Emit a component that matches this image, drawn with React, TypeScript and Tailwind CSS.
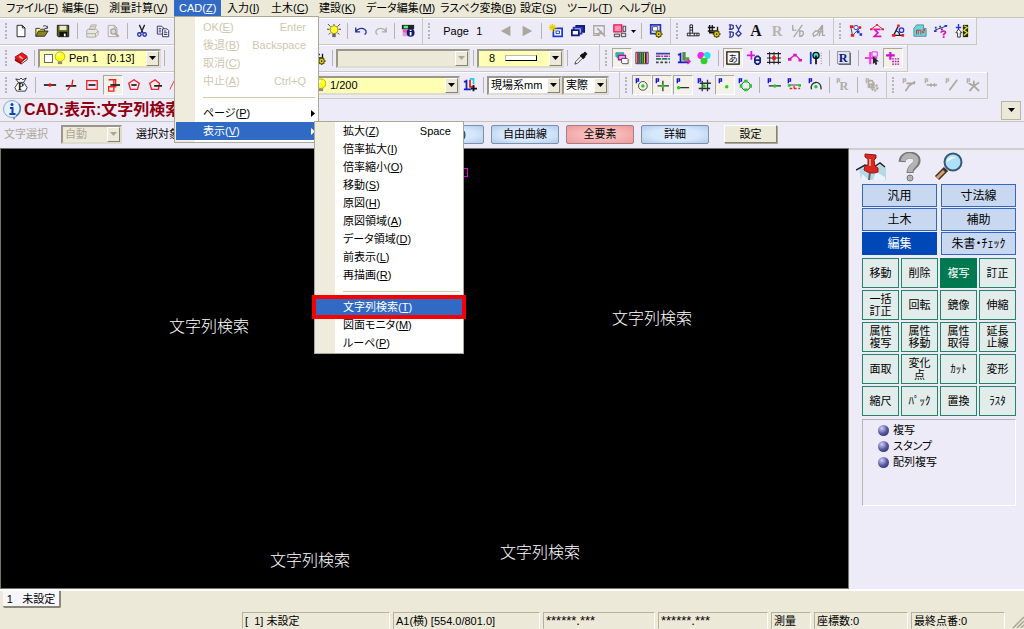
import type { ReactNode } from "react";
import clsx from "clsx";

const gear = (
  <>
    <path d="M11 7v9M6.5 11.5h9M8 8.5l6 6M14 8.5l-6 6" stroke="#5c5000" strokeWidth="2" />
    <circle cx="11" cy="11.5" r="3" fill="#e8d820" stroke="#5c5000" />
    <circle cx="11" cy="11.5" r="1" fill="#222" />
  </>
);

const snapFlag = <path d="M1.5 6V1H4v2.500H2" stroke="#1010f0" strokeWidth="1.500" fill="none" />;
const greyFlag = <path d="M1.5 6V1H4v2.500H2" stroke="#b4b2a8" strokeWidth="1.500" fill="none" />;

const icons: Record<string, ReactNode> = {
  new: <path d="M3.5 1.5h6l3 3v10h-9zM9.5 1.5v3h3" fill="#fff" stroke="#111" />,
  open: (
    <>
      <path d="M1 14V5h4l1 1h5v3" fill="#ffff70" stroke="#222" />
      <path d="M1 14l3-6h11l-4 6z" fill="#8c8420" stroke="#222" />
      <path d="M9 3c2-2 4-1 5 1m0-2v3h-3" fill="none" stroke="#222" />
    </>
  ),
  save: (
    <>
      <path d="M1.500 1.500h13v13h-12l-1-1z" fill="#5c6410" stroke="#111" />
      <path d="M4 2h8v5H4z" fill="#e8e8d8" />
      <path d="M4 9h9v5H4z" fill="#111" />
      <path d="M9 11h2v3H9z" fill="#fff" />
    </>
  ),
  print: (
    <g fill="#e8e6e0" stroke="#aaa89c">
      <path d="M5 6l2-5h6l-2 5zM2 7l2-1h9l2 2v4l-3 3H2z" />
      <path d="M2 11h10l3-3M12 11v4M7 3h4" fill="none" />
    </g>
  ),
  preview: (
    <g fill="none" stroke="#aaa89c">
      <path d="M2.500 1.500h7l3 3v10h-10zM9.500 1.500v3h3" />
      <circle cx="8.500" cy="8.500" r="3" strokeWidth="1.500" fill="#dddbd2" />
      <path d="M10.500 10.500l4 4" strokeWidth="2.500" />
    </g>
  ),
  cut: (
    <g fill="none">
      <path d="M5 1l4 9M11 1l-4 9" stroke="#223" strokeWidth="1.500" />
      <circle cx="5" cy="12" r="2" stroke="#2030b0" strokeWidth="1.500" />
      <circle cx="11" cy="12" r="2" stroke="#2030b0" strokeWidth="1.500" />
    </g>
  ),
  copy: (
    <g fill="#fff" stroke="#202060">
      <path d="M1.500 2.500h5l2 2v7h-7z" />
      <path d="M7.500 5.500h5l2 2v7h-7z" />
      <path d="M3 5h3M3 7h3M3 9h3M9 8h3M9 10h4M9 12h4" />
    </g>
  ),
  bulb: (
    <>
      <path d="M8 0v2M0 6h3M13 6h3M1 0l3 3M15 0l-3 3M2 12l2-2M14 12l-2-2" stroke="#403800" />
      <circle cx="8" cy="6.500" r="4.500" fill="#ffff30" stroke="#a09000" />
      <path d="M6 11h4v4H6z" fill="#666" />
    </>
  ),
  smallBulb: (
    <>
      <circle cx="8" cy="6.500" r="5.500" fill="#ffff20" stroke="#b8a800" />
      <path d="M5.500 12h5v3h-5z" fill="#888" />
      <path d="M5 5l3-2" stroke="#fff" strokeWidth="2" />
    </>
  ),
  undo: <path d="M2 4v5h5M2 9c2-4 7-5 10-3 3 2 2 5 0 6" fill="none" stroke="#2030a0" strokeWidth="1.500" />,
  redo: <path d="M14 4v5H9M14 9c-2-4-7-5-10-3-3 2-2 5 0 6" fill="none" stroke="#b0aea4" strokeWidth="1.500" />,
  info: (
    <>
      <path d="M1 1h14v5H1z" fill="#222" />
      <path d="M2 6h6v4H2z" fill="#f050c0" />
      <path d="M2 10h6v4H2z" fill="#d8a0d0" />
      <path d="M3 2h5v3H3z" fill="#4f6" />
      <circle cx="11" cy="10" r="4.500" fill="#101870" />
      <path d="M11 9v4M11 6.500v1.500" stroke="#fff" strokeWidth="2" />
    </>
  ),
  prev: <path d="M13 2v12L2 8z" fill="#aaa89c" />,
  next: <path d="M3 2v12l11-6z" fill="#aaa89c" />,
  winNew: (
    <>
      <path d="M5 5h10v9H5z" fill="#fff" stroke="#1838e0" strokeWidth="2" />
      <path d="M8 8h4v3H8z" fill="#fff" stroke="#1030a0" />
      <path d="M4 0v9M0 4h9M1 1l7 7M7 1L1 7" stroke="#e8d000" strokeWidth="1.500" />
    </>
  ),
  winStack: (
    <>
      <path d="M6 2h9v7H6z" fill="#2030c0" stroke="#111870" strokeWidth="2" />
      <path d="M3 4h9v7H3z" fill="#fff" stroke="#2030c0" strokeWidth="2" />
      <path d="M1 7h8v6H1z" fill="#f4f4ff" stroke="#111870" strokeWidth="2" />
    </>
  ),
  winClose: (
    <g fill="none" stroke="#aaa89c">
      <path d="M2 2h12v9H2zM1 13h8" strokeWidth="1.500" />
      <path d="M6 5l9 9M6 13l5-5" strokeWidth="2" />
    </g>
  ),
  winTile: (
    <>
      <path d="M1 1h9v8H1z" fill="#ff90b8" stroke="#f01050" strokeWidth="1.500" />
      <path d="M11.500 2.500h3v6h-3zM1.500 11.500h6v3h-6zM9.500 10.500h5v4h-5z" fill="#ddd" stroke="#333" />
    </>
  ),
  winSet: (
    <>
      <path d="M2 1h11v10H2z" fill="#fff" stroke="#2038c0" strokeWidth="2" />
      <path d="M4 3h6v5H4z" fill="none" stroke="#446" />
      {gear}
    </>
  ),
  rulerL: <path d="M4.500 1v9.500H15v3H1.500v-3h3M7.500 1v9M4.500 1h3M4.500 4h3M4.500 7h3M9.500 10.500v3M12.500 10.500v3M4.500 10.500v3" fill="none" stroke="#111" />,
  rulerSet: (
    <>
      <path d="M3 1v9h7M1 4h8M6 1v7M1 8h12M12 3v6" fill="none" stroke="#111" strokeWidth="1.500" />
      {gear}
    </>
  ),
  dxy: (
    <g fill="none" stroke="#3038a0" strokeWidth="1.500">
      <path d="M1 1h3l2 1v3L4 6H1M2.500 1v5M1 9h3l2 1v3l-2 2H1M2.500 9v5" />
      <path d="M9 1l3 5 3-5M12 5v3l-3 3 3 3 3-3-3-3" />
    </g>
  ),
  bigA: <text x="8" y="14" textAnchor="middle" className="font-['Liberation_Serif'] text-[18px] leading-4 font-bold" fill="#111">A</text>,
  greyR: <text x="8" y="14" textAnchor="middle" className="font-['Liberation_Serif'] text-[17px] leading-4 font-bold" fill="#b8b6aa">R</text>,
  ld: <path d="M2 1v6h4M13 1L3 15M10 8v6h2l2-2V9l-2-1z" fill="none" stroke="#aaa89c" strokeWidth="1.500" />,
  da: <path d="M12 1L7 8H4l-3 3 1 3 4-2 2-4M8 14l4-13v12h3M8 9h5" fill="none" stroke="#aaa89c" strokeWidth="1.500" />,
  calcTheta: (
    <g fill="none">
      <path d="M2 3l2 10L13 4" stroke="#333" />
      <path d="M1 3h4M2 13h4M11 4h3" stroke="#e02020" strokeWidth="3" />
      <circle cx="8" cy="4" r="2.500" stroke="#2030f0" />
      <path d="M9 9h3M12 12h3" stroke="#2030f0" strokeWidth="3" />
    </g>
  ),
  sigma: (
    <g fill="none">
      <path d="M1 6l7-5 7 5" stroke="#e02020" />
      <path d="M0 6h3M13 6h3M7 1h2" stroke="#e02020" strokeWidth="2" />
      <path d="M12 6H5l4 4-4 4h8" stroke="#e010c0" strokeWidth="2" />
    </g>
  ),
  angle: (
    <g fill="none">
      <path d="M8 3L3 13h11M6 8c3 1 4 2 4 5" stroke="#222" strokeWidth="1.500" />
      <path d="M7 2h3M1 13h4M12 13h3" stroke="#f02020" strokeWidth="3" />
      <circle cx="12" cy="7" r="2.500" stroke="#2030f0" strokeWidth="1.500" />
    </g>
  ),
  area: (
    <>
      <path d="M1 5l3-4h8v4h3v9H1z" fill="#60dce0" stroke="#608088" />
      <path d="M4 12V7h2v5M6 7h3v5M11 6h2v2h-2v2h2" stroke="#e02020" fill="none" />
    </>
  ),
  lineQ: (
    <>
      <path d="M1 7L15 2" stroke="#222" />
      <path d="M1 4h2M0 8h3M6 3h2M8 6h2M12 2h3" stroke="#2030f0" strokeWidth="2" />
      <path d="M8 10c0-3 6-2 5 0l-2 2v1M11 14v2" stroke="#e010c0" strokeWidth="2" fill="none" />
    </>
  ),
  updown: (
    <>
      <path d="M4 0v8M1 4h6" stroke="#2030f0" strokeWidth="1.500" />
      <path d="M4 6l4 4H6v5H3v-5H1z" stroke="#222" fill="#fff" />
      <path d="M9 1h6v14H9z" fill="#222" />
      <path d="M10 2l4 2-4 3 4 3-4 3" stroke="#e0e020" fill="none" strokeWidth="1.500" />
    </>
  ),
  book: (
    <>
      <path d="M1 7l8-5 6 4-7 7z" fill="#f01818" stroke="#900" />
      <path d="M1 8v3l7 4v-2z" fill="#900" />
      <path d="M8 13l7-6v3l-7 5z" fill="#fff" stroke="#700" />
      <path d="M6 6l4 3" stroke="#ffb0b0" strokeWidth="2" />
    </>
  ),
  dropper: (
    <>
      <path d="M1 15l1-3 7-7 2 2-7 7z" fill="#fff" stroke="#333" />
      <path d="M8 4l4 4M10 6l4-4" stroke="#111" strokeWidth="4" />
    </>
  ),
  layers: (
    <>
      <path d="M1 2h9v6H3L1 6z" fill="#20c8b0" stroke="#409080" />
      <path d="M4 5h8v5H4z" fill="#f8a0e0" stroke="#b010a0" strokeWidth="1.500" />
      <path d="M7.500 8.500H14l1 1v5H9l-1.500-1z" fill="#fff" stroke="#403860" />
    </>
  ),
  palette: (
    <>
      <path d="M1 1.500h14v13H1z" fill="#fff" stroke="#222" />
      <path d="M3 2v12" stroke="#e02020" strokeWidth="2" />
      <path d="M5.500 2v12" stroke="#30a0d0" strokeWidth="2" />
      <path d="M8 2v12" stroke="#20c020" strokeWidth="2" />
      <path d="M10.500 2v12" stroke="#e0d000" strokeWidth="2" />
      <path d="M13 2v12" stroke="#c020c0" strokeWidth="2" />
      <path d="M4.500 2v12M7 2v12M9.500 2v12M12 2v12" stroke="#111" />
    </>
  ),
  lineTypes: (
    <>
      <path d="M0 3h16" stroke="#3048a0" strokeWidth="2" />
      <path d="M0 6h16" stroke="#c020c0" strokeWidth="1.500" strokeDasharray="5 1 2 1" />
      <path d="M0 9h16" stroke="#208050" strokeWidth="2" strokeDasharray="6 1" />
      <path d="M0 13h16" stroke="#444" strokeWidth="2" strokeDasharray="3 2" />
    </>
  ),
  axes: (
    <g fill="none" strokeWidth="2">
      <path d="M8 1v8h6" stroke="#20c820" strokeWidth="4" />
      <path d="M1 4h3V2v11H1h13" stroke="#1818c0" />
      <path d="M8 12h7M12 9l3 3-3 3M8 2v8" stroke="#e020c0" strokeWidth="1.500" />
    </g>
  ),
  rgb: (
    <>
      <circle cx="4.500" cy="5" r="4" fill="#f020f0" />
      <circle cx="11.500" cy="5" r="4" fill="#20e0f0" />
      <circle cx="8" cy="11" r="4" fill="#30d030" />
      <path d="M8 5l2 3H6z" fill="#ff4" />
    </>
  ),
  kana: (
    <>
      <path d="M1 1h14v14H1z" fill="#fff" stroke="#111" strokeWidth="1.500" />
      <text x="8" y="12" textAnchor="middle" className="font-['Noto_Sans_CJK_JP'] text-[11px] leading-4" fill="#111">あ</text>
    </>
  ),
  plusTheta: (
    <g fill="none">
      <path d="M5 0v10M0 5h9" stroke="#e010e0" strokeWidth="2" />
      <path d="M9 8l2-2h2l2 2v5l-2 2h-2l-2-2zM9 10.500h6" stroke="#1a2080" strokeWidth="2" />
    </g>
  ),
  grid: (
    <>
      <path d="M3 1v14M8 1v14M13 1v14M0 3h16M0 8h16M0 13h16" stroke="#222" strokeWidth="1.200" />
      <path d="M6 6h4v4H6z" fill="#f01010" />
    </>
  ),
  curve: (
    <>
      <path d="M2 9l5-4 3 1 4 4" fill="none" stroke="#e020d0" strokeWidth="1.500" />
      <path d="M0 8h4v3H0zM6 3h4v3H6zM12 9h4v3h-4z" fill="#e010c0" />
    </>
  ),
  pinLine: (
    <>
      <path d="M2 1v14" stroke="#1030c0" strokeWidth="2" />
      <circle cx="8" cy="5" r="3.500" fill="#40e0e0" stroke="#111" strokeWidth="1.500" />
      <path d="M8 5v10" stroke="#111" strokeWidth="2" />
      <path d="M14 2v13" stroke="#666" strokeDasharray="1 2" />
    </>
  ),
  boxR: (
    <>
      <path d="M2 2h14v14H2z" fill="#666" />
      <path d="M.5.5h14v14H.5z" fill="#e0e4f8" stroke="#888" />
      <text x="7" y="13" textAnchor="middle" className="font-['Liberation_Serif'] text-[14px] leading-4 font-bold" fill="#101880">R</text>
    </>
  ),
  pickGrid: (
    <>
      <path d="M0 8h14M6 1v14" stroke="#f040e0" strokeWidth="2.500" fill="none" />
      <path d="M8 1h6v5H8z" stroke="#e020e0" fill="none" />
      <path d="M9 6v9l2-2 1 3 2-1-1-3h3z" fill="#222" />
    </>
  ),
  plusDots: (
    <>
      <path d="M5 1v9M0 5h10" stroke="#d010d0" strokeWidth="2.500" />
      <path d="M7 9h8M7 12h8M7 15h8" stroke="#b010b0" strokeWidth="1.500" strokeDasharray="2 1" />
    </>
  ),
  bag: (
    <>
      <path d="M5 5L2 1l4 1 2-2 2 2 4-2-3 5M5 5h6l4 6-2 4H3l-2-4z" fill="#fff" stroke="#222" />
      <text x="8" y="14" textAnchor="middle" className="font-['Liberation_Serif'] text-[11px] leading-4 font-bold" fill="#111">P</text>
    </>
  ),
  point: (
    <>
      <path d="M1 8h14" stroke="#222" strokeWidth="2" />
      <circle cx="8" cy="8" r="2" fill="#f01010" />
    </>
  ),
  pointLine: (
    <>
      <path d="M2 9h12" stroke="#222" strokeWidth="2" />
      <path d="M4 14l3-5h2l1-7" stroke="#f01010" strokeWidth="1.500" fill="none" />
    </>
  ),
  rectLine: (
    <>
      <path d="M2 3h12v10H2z" fill="none" stroke="#f02020" strokeWidth="1.500" />
      <path d="M4 8h8" stroke="#222" strokeWidth="2" />
    </>
  ),
  rectCross: (
    <>
      <path d="M3 2h8v8H3v5h6V2" fill="none" stroke="#f02020" strokeWidth="1.500" />
      <path d="M5 8h11" stroke="#222" strokeWidth="2" />
    </>
  ),
  penta: (
    <>
      <path d="M8 2l6 4-2 7H4L2 6z" fill="none" stroke="#f02020" strokeWidth="1.500" />
      <path d="M5 8h6" stroke="#222" strokeWidth="2" />
    </>
  ),
  pentaOut: (
    <>
      <path d="M8 2l5 4-1 7H4L2 6z" fill="none" stroke="#f02020" strokeWidth="1.500" />
      <path d="M7 9h9" stroke="#222" strokeWidth="2" />
    </>
  ),
  poly: <path d="M1 13L6 3h7" fill="none" stroke="#f02020" />,
  axesPlus: (
    <g fill="none" strokeWidth="2">
      <path d="M1 4h3V2v11H1h8" stroke="#1020c0" />
      <path d="M8 1h4v6" stroke="#20d0e0" />
      <path d="M8 2v8h5" stroke="#e02020" />
      <path d="M12 8v7M9 12h7" stroke="#111" />
    </g>
  ),
  snapCircle: (
    <>
      {snapFlag}
      <circle cx="9" cy="9" r="5" fill="none" stroke="#333" />
      <circle cx="9" cy="9" r="2" fill="#20d020" />
    </>
  ),
  snapCross: (
    <>
      {snapFlag}
      <path d="M9 3v12M3 9h13" stroke="#333" strokeWidth="1.500" />
      <circle cx="9" cy="9" r="2" fill="#20d020" />
    </>
  ),
  snapEnd: (
    <>
      {snapFlag}
      <path d="M3 11h12" stroke="#333" strokeWidth="1.500" />
      <circle cx="3" cy="11" r="2" fill="#20d020" />
    </>
  ),
  snapGrid: (
    <>
      <path d="M6 3v12M12 2v13M3 6h13M2 12h13" stroke="#333" strokeWidth="1.500" />
      {snapFlag}
      <circle cx="8" cy="9" r="2" fill="#20d020" />
    </>
  ),
  snapFree: (
    <>
      {snapFlag}
      <circle cx="10" cy="10" r="2" fill="#20d020" />
    </>
  ),
  snapQuad: (
    <>
      {snapFlag}
      <circle cx="9" cy="9" r="5" fill="none" stroke="#333" />
      <path d="M7 2h4v3H7zM2 7h3v4H2zM13 7h3v4h-3zM7 12h4v3H7z" fill="#20d020" />
    </>
  ),
  snapMid: (
    <>
      {snapFlag}
      <path d="M2 9h14" stroke="#333" strokeWidth="1.500" />
      <circle cx="9" cy="9" r="2" fill="#20d020" />
    </>
  ),
  snapDiv: (
    <>
      {snapFlag}
      <path d="M2 8h14" stroke="#333" />
      <path d="M3 12h12M8 9v4" stroke="#d03030" strokeWidth="1.500" strokeDasharray="3 2" />
      <path d="M1 7h3v3H1zM13 7h3v3h-3z" fill="#20d020" />
    </>
  ),
  snapArc: (
    <>
      {snapFlag}
      <path d="M4 13c-3-9 12-12 11 0" fill="none" stroke="#333" strokeWidth="1.500" />
      <circle cx="9" cy="10" r="2" fill="#20d020" />
    </>
  ),
  snapR: (
    <>
      {greyFlag}
      <text x="9" y="14" textAnchor="middle" className="font-['Liberation_Serif'] text-[14px] leading-4 font-bold" fill="#b0aea2">R</text>
    </>
  ),
  snapSet: (
    <g fill="none" stroke="#b0aea2">
      {greyFlag}
      <path d="M4 3h4l2 3-2 2 3 4M4 4v7" strokeWidth="2" />
      <circle cx="11" cy="11" r="3" strokeWidth="3" strokeDasharray="2 1" />
      <circle cx="7" cy="9" r="2" strokeWidth="2" />
    </g>
  ),
  grey1: (
    <>
      {greyFlag}
      <path d="M5 6h10M15 4L8 9l-4 6" fill="none" stroke="#aaa89c" strokeWidth="2" />
    </>
  ),
  grey2: (
    <>
      {greyFlag}
      <path d="M3 8h12M8 6v4M12 6v4" fill="none" stroke="#aaa89c" strokeWidth="1.500" />
    </>
  ),
  grey3: (
    <>
      {greyFlag}
      <path d="M14 2L5 14" fill="none" stroke="#aaa89c" strokeWidth="2" />
    </>
  ),
  grey4: (
    <>
      {greyFlag}
      <path d="M3 6l6 3 6-4M9 3v7M9 9l-5 6M9 9l6 6" fill="none" stroke="#aaa89c" strokeWidth="2" />
    </>
  ),
};

function Icon({ name }: { name: string }) {
  return (
    <svg viewBox="0 0 16 16" className="h-3.5 w-3.5 shrink-0 overflow-visible" aria-hidden="true">
      {icons[name]}
    </svg>
  );
}

function Tool({ name, pressed }: { name: string; pressed?: boolean }) {
  return (
    <button
      type="button"
      aria-label={name}
      aria-pressed={pressed}
      className={clsx(
        "flex h-5 w-5 shrink-0 items-center justify-center",
        pressed && "border border-t-[#aca899] border-l-[#aca899] border-r-white border-b-white bg-[#f4f2e8]"
      )}
    >
      <Icon name={name} />
    </button>
  );
}

// "|" draws a separator, a trailing "*" marks a pressed tool
function Tools({ list }: { list: string }) {
  return list.split(" ").map((t, i) =>
    t === "|" ? <Sep key={i} /> : <Tool key={i} name={t.replace("*", "")} pressed={t.endsWith("*")} />
  );
}

function Sep() {
  return <span className="mx-[3px] h-4 w-px shrink-0 bg-[#b8b5a8]" />;
}

function Toolbar({ className, children }: { className: string; children: ReactNode }) {
  return (
    <div
      role="toolbar"
      className={clsx(
        "flex h-[27px] shrink-0 items-center justify-between border-r border-b border-[#cbc8bd] pr-1 pl-[5px] shadow-[inset_0_1px_#fff]",
        className
      )}
    >
      <span className="mr-1 h-4 w-0.5 shrink-0 border-l-2 border-dotted border-[#b8b6b0]" />
      {children}
    </div>
  );
}

interface ComboProps {
  label: string;
  value: string;
  className: string;
  yellow?: boolean;
  disabled?: boolean;
  lead?: ReactNode;
  extra?: ReactNode;
}

function Combo({ label, value, className, yellow, disabled, lead, extra }: ComboProps) {
  return (
    <label
      className={clsx(
        "flex h-[19px] shrink-0 items-center border-2 border-t-[#9a978a] border-l-[#9a978a] border-r-[#dedbd0] border-b-[#dedbd0]",
        yellow && "bg-[#ffffb4]",
        !yellow && (disabled ? "bg-[#ece9d8]" : "bg-white"),
        className
      )}
    >
      {lead}
      <select
        aria-label={label}
        disabled={disabled}
        className={clsx(
          "h-full min-w-0 flex-1 appearance-none bg-transparent pl-0.5 leading-3 outline-none",
          disabled && "text-[#aca899]"
        )}
      >
        <option>{value}</option>
      </select>
      {extra}
      <span className="pointer-events-none flex h-full w-[13px] items-center justify-center border border-t-white border-l-white border-r-[#858278] border-b-[#858278] bg-[#ece9d8]">
        <Triangle color={disabled ? "#aca899" : "#000"} />
      </span>
    </label>
  );
}

function Triangle({ color = "#000" }: { color?: string }) {
  return (
    <svg viewBox="0 0 7 4" className="h-1 w-[7px] shrink-0" aria-hidden="true">
      <path d="M0 0h7L3.500 4z" fill={color} />
    </svg>
  );
}

function Accel({ text, k }: { text: string; k: string }) {
  return (
    <span>
      {text}(<span className="underline">{k}</span>)
    </span>
  );
}

interface Entry {
  text: string;
  k: string;
  hint?: string;
  disabled?: boolean;
  sub?: boolean;
  active?: boolean;
  boxed?: boolean;
}

const cadMenu: (Entry | null)[] = [
  { text: "OK", k: "E", hint: "Enter", disabled: true },
  { text: "後退", k: "B", hint: "Backspace", disabled: true },
  { text: "取消", k: "C", disabled: true },
  { text: "中止", k: "A", hint: "Ctrl+Q", disabled: true },
  null,
  { text: "ページ", k: "P", sub: true },
  { text: "表示", k: "V", sub: true, active: true },
];

const viewMenu: (Entry | null)[] = [
  { text: "拡大", k: "Z", hint: "Space" },
  { text: "倍率拡大", k: "I" },
  { text: "倍率縮小", k: "O" },
  { text: "移動", k: "S" },
  { text: "原図", k: "H" },
  { text: "原図領域", k: "A" },
  { text: "データ領域", k: "D" },
  { text: "前表示", k: "L" },
  { text: "再描画", k: "R" },
  null,
  { text: "文字列検索", k: "T", active: true, boxed: true },
  { text: "図面モニタ", k: "M" },
  { text: "ルーペ", k: "P" },
];

function Menu({ items, className }: { items: (Entry | null)[]; className: string }) {
  return (
    <div
      role="menu"
      className={clsx(
        "absolute border border-[#aca899] bg-[linear-gradient(90deg,#efecde_20px,#fff_20px)] px-px text-black",
        className
      )}
    >
      {items.map((item, i) =>
        item ? (
          <button
            key={i}
            type="button"
            role="menuitem"
            disabled={item.disabled}
            className={clsx(
              "relative flex h-[18px] w-full items-center justify-between pl-[27px] leading-[18px]",
              item.disabled && "text-[#cdc8ae]",
              item.active && "bg-[#316ac5] text-white"
            )}
          >
            <Accel text={item.text} k={item.k} />
            {item.hint && <span className="pr-[11px]">{item.hint}</span>}
            {item.sub && (
              <svg viewBox="0 0 4 7" className="mr-0.5 h-[7px] w-1" aria-hidden="true">
                <path d="M0 0v7l4-3.500z" fill="currentColor" />
              </svg>
            )}
            {item.boxed && <span className="absolute -inset-x-1 -inset-y-[3px] border-4 border-[#f80000]" />}
          </button>
        ) : (
          <div key={i} className="flex h-3.5 items-center pr-0.5 pl-[27px]">
            <span className="h-px flex-1 bg-[#d4cbac]" />
          </div>
        )
      )}
    </div>
  );
}

const menuBar = [
  { text: "ファイル", k: "F", w: "w-[56px]" },
  { text: "編集", k: "E", w: "w-[47px]" },
  { text: "測量計算", k: "V", w: "w-[65px]" },
  { text: "CAD", k: "Z", w: "w-[53px]" },
  { text: "入力", k: "I", w: "w-[44px]" },
  { text: "土木", k: "C", w: "w-[48px]" },
  { text: "建設", k: "K", w: "w-[47px]" },
  { text: "データ編集", k: "M", w: "w-[74px]" },
  { text: "ラスベク変換", k: "B", w: "w-[80px]" },
  { text: "設定", k: "S", w: "w-[47px]" },
  { text: "ツール", k: "T", w: "w-[52px]" },
  { text: "ヘルプ", k: "H", w: "w-[52px]" },
];

function MenuBar() {
  return (
    <nav className="flex h-[17px] shrink-0 bg-[#ece9d8] pl-1.5">
      {menuBar.map((m) => (
        <div key={m.text} className={clsx("relative", m.w)}>
          <button
            type="button"
            className={clsx(
              "block h-4 text-left leading-[15px] whitespace-nowrap",
              m.text === "CAD" && "w-[47px] bg-[#316ac5] pl-[5px] text-white"
            )}
          >
            <Accel text={m.text} k={m.k} />
          </button>
          {m.text === "CAD" && (
            <>
              <Menu items={cadMenu} className="top-4 left-0 z-10 w-[145px] pt-px pb-0.5" />
              <Menu items={viewMenu} className="top-[121px] left-[140px] z-20 w-[150px] pb-px" />
            </>
          )}
        </div>
      ))}
    </nav>
  );
}

const pills = [
  { text: ")", look: "pl-[28px]" },
  { text: "自由曲線" },
  { text: "全要素", pink: true },
  { text: "詳細" },
];

const categories = ["汎用", "寸法線", "土木", "補助", "編集", "朱書・ﾁｪｯｸ"];

const commands = [
  "移動", "削除", "複写", "訂正",
  "一括\n訂正", "回転", "鏡像", "伸縮",
  "属性\n複写", "属性\n移動", "属性\n取得", "延長\n止線",
  "面取", "変化\n点", "ｶｯﾄ", "変形",
  "縮尺", "ﾊﾟｯｸ", "置換", "ﾗｽﾀ",
];

function SidePanel() {
  return (
    <aside className="w-[175px] shrink-0 border-t-2 border-[#d0cdd0] pr-2 pl-[13px]">
      <div className="flex h-[34px] items-center">
        <button type="button" aria-label="ピン" className="w-9">
          <svg viewBox="0 0 30 30" className="-ml-1.5 h-[30px] w-[30px]">
            <path d="M3 16l8-4 9 3 5-3 5 4v12H5z" fill="#b8d8e8" />
            <path d="M6 22l7 6h-8zM20 20l9 5v3H17z" fill="#e8f4fa" />
            <path d="M0 18l9-5 5 2M18 15l6-4 5 4" fill="none" stroke="#222" strokeWidth="1.500" />
            <path d="M14 20l-1 8" stroke="#666" strokeWidth="2" />
            <path d="M9 2l11 1v3l-2 2 1 6 3 2v4c-5 2-10 1-14-2l1-4 3-1V7L9 5z" fill="#d82820" stroke="#901810" />
            <path d="M14 7v7" stroke="#ff9080" strokeWidth="2" />
          </svg>
        </button>
        <button type="button" aria-label="ヘルプ" className="w-9">
          <svg viewBox="0 0 24 30" className="h-[30px] w-6">
            <path d="M4 10C5 0 20 2 19 9c0 5-7 5-7 12" fill="none" stroke="#777" strokeWidth="7" />
            <path d="M5 9C6 1 19 3 18 9c0 4-6 5-6 11" fill="none" stroke="#b4b4b4" strokeWidth="5" />
            <circle cx="12" cy="26" r="3" fill="#b4b4b4" stroke="#777" />
          </svg>
        </button>
        <button type="button" aria-label="検索">
          <svg viewBox="0 0 30 30" className="h-[30px] w-[30px]">
            <path d="M12 17L3 26" stroke="#403028" strokeWidth="6" />
            <path d="M10 19l-7 7" stroke="#d8a070" strokeWidth="3" />
            <circle cx="19" cy="10" r="8.500" fill="#b0e0f8" stroke="#385878" strokeWidth="2" />
            <path d="M13 10c0-5 6-6 9-4-4 0-6 2-9 4z" fill="#f0fcff" />
          </svg>
        </button>
      </div>
      <div className="grid grid-cols-2 gap-x-1 gap-y-px text-xs">
        {categories.map((c) => (
          <button
            key={c}
            type="button"
            className={clsx(
              "h-[23px] border leading-5",
              c === "編集" ? "border-[#0048b8] bg-[#0048b8] text-white" : "border-[#3468c0] bg-[#c8d8f0]"
            )}
          >
            {c}
          </button>
        ))}
      </div>
      <div className="mt-[3px] grid grid-cols-4 gap-0.5">
        {commands.map((c) => (
          <button
            key={c}
            type="button"
            className={clsx(
              "h-[30px] border leading-3 whitespace-pre",
              c === "複写" ? "border-[#007850] bg-[#007850] text-white" : "border-[#258468] bg-[#e2ecea]"
            )}
          >
            {c}
          </button>
        ))}
      </div>
      <ul className="mt-[3px] h-[87px] border border-t-[#b8b5b0] border-l-[#b8b5b0] border-r-white border-b-white pt-0.5 pl-[15px]">
        {["複写", "スタンプ", "配列複写"].map((t) => (
          <li key={t} className="flex h-4 items-center gap-1">
            <span className="h-[11px] w-[11px] rounded-full bg-[radial-gradient(circle_at_35%_30%,#d0d0ff,#5858a0_50%,#202050)]" />
            {t}
          </li>
        ))}
      </ul>
    </aside>
  );
}

const drawingTexts = ["left-[168px] top-[168px]", "left-[611px] top-[160px]", "left-[269px] top-[402px]", "left-[499px] top-[394px]"];

const statusCells = [
  { text: "[  1] 未設定", w: "w-[148px]" },
  { text: "A1(横) [554.0/801.0]", w: "w-[147px]" },
  { text: "******.***", w: "w-[112px] text-[13px]" },
  { text: "******.***", w: "w-[110px] text-[13px]" },
  { text: "測量", w: "w-[40px]" },
  { text: "座標数:0", w: "w-[94px]" },
  { text: "最終点番:0", w: "w-[94px]" },
];

export default function App() {
  return (
    <div className="flex h-screen flex-col overflow-hidden bg-[#edebf8] font-['Liberation_Sans','Noto_Sans_CJK_JP',sans-serif] text-[11px] leading-4 text-black [font-feature-settings:'palt']">
      <MenuBar />

      <header className="shrink-0 border-t border-[#c8c5b8]">
        <div className="flex">
          <Toolbar className="w-[423px]">
            <div className="flex flex-1 items-center gap-px">
              <Tools list="new open save | print preview | cut copy" />
            </div>
            <Tools list="bulb | undo redo | info" />
          </Toolbar>
          <Toolbar className="w-[248px]">
            <span className="pl-2">Page</span>
            <span className="pr-3 pl-1.5">1</span>
            <Tools list="prev next | winNew winStack winClose winTile" />
            <svg viewBox="0 0 5 3" className="h-[3px] w-[5px]" aria-hidden="true">
              <path d="M0 0h5L2.500 3z" />
            </svg>
            <Tools list="| winSet" />
          </Toolbar>
          <Toolbar className="w-[163px]">
            <Tools list="rulerL rulerSet dxy bigA greyR ld da" />
          </Toolbar>
          <Toolbar className="w-[143px]">
            <Tools list="calcTheta sigma angle area lineQ updown" />
          </Toolbar>
        </div>
        <div className="flex">
          <Toolbar className="w-[600px]">
            <div className="flex flex-1 items-center">
              <Tool name="book" />
              <Sep />
              <Combo
                label="ペン"
                value={"Pen 1\u00a0\u00a0\u00a0[0.13]"}
                yellow
                className="w-[123px]"
                lead={
                  <span className="flex items-center pl-1">
                    <span className="h-[9px] w-[9px] border border-[#666] bg-white" />
                    <Icon name="smallBulb" />
                  </span>
                }
              />
              <Sep />
            </div>
            <Tool name="rulerSet" />
            <Sep />
            <Combo label="線種" value="" disabled className="w-[134px]" />
            <Sep />
            <Combo
              label="線幅"
              value="8"
              yellow
              className="w-[87px] pl-2"
              extra={<span className="mr-3 h-1.5 w-8 border border-t-[#bbb] border-l-[#bbb] border-r-black border-b-black bg-white" />}
            />
            <Sep />
            <Tool name="dropper" />
            <span className="w-1" />
          </Toolbar>
          <Toolbar className="w-[308px]">
            <Tools list="layers* palette lineTypes axes rgb | kana* plusTheta grid curve pinLine | boxR | pickGrid plusDots*" />
          </Toolbar>
        </div>
        <div className="flex">
          <Toolbar className="w-[620px]">
            <div className="flex flex-1 items-center gap-px">
              <Tools list="bag | point pointLine rectLine rectCross* penta pentaOut poly" />
            </div>
            <Combo
              label="縮尺"
              value="1/200"
              yellow
              className="w-[148px]"
              lead={<Icon name="smallBulb" />}
            />
            <Tool name="axesPlus" />
            <Sep />
            <Combo label="座標系" value="現場系mm" className="w-[75px]" />
            <Combo label="寸法" value="実際" className="w-[47px]" />
            <span className="w-1.5" />
          </Toolbar>
          <Toolbar className="w-[267px]">
            <Tools list="snapCircle* snapCross* snapEnd* snapGrid snapFree* snapQuad | snapMid snapDiv snapArc | snapR | snapSet" />
          </Toolbar>
          <Toolbar className="w-[101px]">
            <Tools list="grey1 grey2 grey3 grey4" />
          </Toolbar>
        </div>

        <div className="flex h-[23px] items-center border-b border-[#c8c5b8] pr-[3px] pl-0.5">
          <svg viewBox="0 0 20 20" className="h-5 w-5 shrink-0" aria-hidden="true">
            <path d="M9 14h6l-3 6z" fill="#4878b8" />
            <circle cx="10" cy="9" r="8.500" fill="#e4f0fc" stroke="#88a8c8" />
            <path d="M14 16c5-3 5-9 3-12" fill="none" stroke="#5078a8" strokeWidth="1.500" />
            <path d="M8 8h2.500v6M7.500 14h6" fill="none" stroke="#1040b0" strokeWidth="2" />
            <circle cx="10" cy="4.500" r="1.500" fill="#1040b0" />
          </svg>
          <strong className="ml-0.5 text-base leading-5 text-[#900010]">CAD:表示:文字列検索</strong>
          <button
            type="button"
            aria-label="履歴"
            className="ml-auto flex h-[19px] w-5 items-center justify-center border border-[#b8b5a0] bg-[#ece9d8]"
          >
            <Triangle />
          </button>
        </div>

        <div className="flex h-[26px] items-center pb-0.5 pl-1">
          <span className="w-[57px] text-[#aca899]">文字選択</span>
          <Combo label="文字選択" value="自動" disabled className="w-[61px]" />
          <span className="ml-3.5">選択対象</span>
          <div className="flex flex-1 gap-[7px] pl-[236px]">
            {pills.map((p) => (
              <button
                key={p.text}
                type="button"
                className={clsx(
                  "h-[19px] w-[68px] rounded-xs border leading-4",
                  p.look,
                  p.pink
                    ? "border-[#a08088] bg-[radial-gradient(ellipse,#f8c0c0_30%,#f09898)]"
                    : "border-[#8090a8] bg-[radial-gradient(ellipse,#d8e8fc_50%,#b0ccec)]"
                )}
              >
                {p.text}
              </button>
            ))}
            <button
              type="button"
              className="ml-2 h-[18px] w-[53px] border border-t-white border-l-white border-r-[#858278] border-b-[#858278] bg-[#ece9d8] leading-4 shadow-[1px_1px_#aca899]"
            >
              設定
            </button>
          </div>
        </div>
      </header>

      <main className="flex min-h-0 flex-1">
        <div className="relative flex-1 border border-[#77746c] bg-black text-base text-white">
          {drawingTexts.map((pos) => (
            <span key={pos} className={clsx("absolute leading-5 font-light", pos)}>
              文字列検索
            </span>
          ))}
          <span className="absolute top-[19px] left-[458px] h-[9px] w-[9px] border border-[#e000e0]" />
        </div>
        <SidePanel />
      </main>

      <footer className="shrink-0 border-t-2 border-white bg-[#ece9d8]">
        <div className="h-[21px] pl-[3px]">
          <button
            type="button"
            className="block h-[17px] w-[58px] rounded-b-xs border-r-2 border-b-2 border-[#8a8778] bg-[#f7f6fc] leading-[14px] whitespace-pre"
          >
            1   未設定
          </button>
        </div>
        <div className="flex h-[17px] items-stretch gap-[3px] pl-[242px]">
          {statusCells.map((s, i) => (
            <span
              key={i}
              className={clsx(
                "border border-t-[#b5b2a0] border-l-[#b5b2a0] border-r-white border-b-transparent pl-0.5 leading-4 whitespace-pre",
                s.w
              )}
            >
              {s.text}
            </span>
          ))}
          <svg viewBox="0 0 12 12" className="mt-1 ml-auto h-3 w-3" aria-hidden="true">
            <path d="M1 12L12 1M5 12l7-7M9 12l3-3" stroke="#a8a594" strokeWidth="1.500" />
          </svg>
        </div>
      </footer>
    </div>
  );
}
